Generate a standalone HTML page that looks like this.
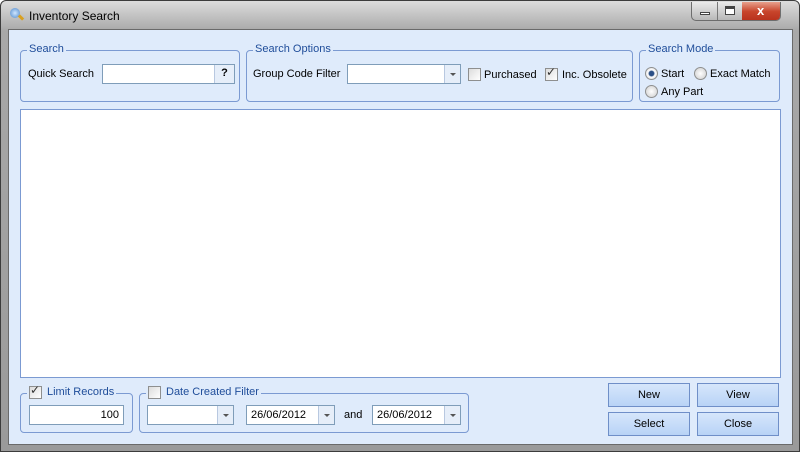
<!DOCTYPE html>
<html><head><style>
*{box-sizing:border-box;margin:0;padding:0}
body{width:800px;height:452px;overflow:hidden;font-family:"Liberation Sans",sans-serif;font-size:11px;color:#000;background:#fff}
.win{position:absolute;left:0;top:0;width:800px;height:452px;border:1px solid #3c3c3c;border-radius:6px 6px 0 0;background:linear-gradient(#dcdcdc,#a8a8a8 30px,#9a9a9a);}
.a{position:absolute}
.client{left:7px;top:28px;width:785px;height:416px;background:#dfebfb;border:1px solid #6a6a6a}
.grp{position:absolute;border:1px solid #7b9ad2;border-radius:4px}
.gt{position:absolute;top:-8px;left:6px;background:#dfebfb;padding:0 2px;color:#1f4d9a;font-size:11px}
.inp{position:absolute;background:#fff;border:1px solid #7f9db9;height:20px;font-size:11px;padding:3px 4px}
.dd{position:absolute;right:0;top:0;width:16px;height:18px;border-left:1px solid #b8c8e0;background:#e6eef9}
.dd:after{content:"";position:absolute;left:5px;top:8px;border:3px solid transparent;border-top:3px solid #555}
.cb{position:absolute;width:13px;height:13px;border:1px solid #8e8f8f;background:linear-gradient(135deg,#dcdcdc,#fff)}
.rb{position:absolute;width:13px;height:13px;border:1px solid #8e8f8f;border-radius:50%;background:radial-gradient(#fff,#ccc)}
.lbl{position:absolute;font-size:11px;white-space:nowrap}
.btn{position:absolute;width:82px;height:24px;border:1px solid #6f8fc8;background:linear-gradient(#d6e6fb,#b8d3f6);text-align:center;line-height:22px;font-size:11px}
</style></head><body>
<div class="win">
 <div class="a" style="left:9px;top:7px;width:10px;height:10px;border-radius:50%;background:radial-gradient(#cfe6ff,#4b86c9)"></div>
 <div class="a" style="left:17px;top:15px;width:6px;height:3px;background:#d9a020;transform:rotate(45deg)"></div>
 <div class="lbl" style="left:28px;top:8px;font-size:12px">Inventory Search</div>
 <div class="a" style="left:690px;top:1px;width:90px;height:19px;border:1px solid #6d6d6d;border-top:none;border-radius:0 0 5px 5px;overflow:hidden;background:linear-gradient(#eaeaea,#b8b8b8)">
  <div class="a" style="left:25px;top:0;width:1px;height:19px;background:#777"></div>
  <div class="a" style="left:50px;top:0;width:40px;height:19px;background:linear-gradient(#e8a08c,#c8452c 50%,#b7301c)"></div>
  <div class="a" style="left:8px;top:10px;width:10px;height:3px;border:1px solid #444;background:#fff"></div>
  <div class="a" style="left:33px;top:4px;width:10px;height:9px;border:1px solid #444;border-top-width:3px;background:#fff"></div>
  <div class="lbl" style="left:65px;top:1px;color:#fff;font-weight:bold;font-size:13px">x</div>
 </div>
 <div class="a client">
  <div class="grp" style="left:11px;top:20px;width:220px;height:52px"><span class="gt">Search</span>
   <div class="lbl" style="left:7px;top:17px">Quick Search</div>
   <div class="inp" style="left:81px;top:13px;width:133px"><div style="position:absolute;right:0;top:0;width:20px;height:18px;border-left:1px solid #b8c8e0;background:#e6eef9;text-align:center;font-weight:bold;line-height:17px">?</div></div>
  </div>
  <div class="grp" style="left:237px;top:20px;width:387px;height:52px"><span class="gt">Search Options</span>
   <div class="lbl" style="left:6px;top:17px">Group Code Filter</div>
   <div class="inp" style="left:100px;top:13px;width:114px"><div class="dd"></div></div>
   <div class="cb" style="left:221px;top:17px"></div><div class="lbl" style="left:237px;top:18px">Purchased</div>
   <div class="cb" style="left:298px;top:17px"></div><div class="lbl" style="left:299px;top:14px;font-size:12px;color:#333">✓</div><div class="lbl" style="left:315px;top:18px">Inc. Obsolete</div>
  </div>
  <div class="grp" style="left:630px;top:20px;width:141px;height:52px"><span class="gt">Search Mode</span>
   <div class="rb" style="left:5px;top:16px;background:radial-gradient(#2b4f86 30%,#fff 45%,#ccc)"></div><div class="lbl" style="left:21px;top:17px">Start</div>
   <div class="rb" style="left:54px;top:16px"></div><div class="lbl" style="left:70px;top:17px">Exact Match</div>
   <div class="rb" style="left:5px;top:34px"></div><div class="lbl" style="left:21px;top:35px">Any Part</div>
  </div>
  <div class="a" style="left:11px;top:79px;width:761px;height:269px;background:#fff;border:1px solid #7b9ad2"></div>
  <div class="grp" style="left:11px;top:363px;width:113px;height:40px"><span class="gt" style="padding-left:20px">Limit Records</span>
   <div class="inp" style="left:8px;top:11px;width:95px;text-align:right">100</div>
  </div>
  <div class="cb" style="left:20px;top:356px"></div><div class="lbl" style="left:21px;top:353px;color:#333;font-size:12px">✓</div>
  <div class="grp" style="left:130px;top:363px;width:330px;height:40px"><span class="gt" style="padding-left:20px">Date Created Filter</span>
   <div class="inp" style="left:7px;top:11px;width:87px"><div class="dd"></div></div>
   <div class="inp" style="left:106px;top:11px;width:89px">26/06/2012<div class="dd"></div></div>
   <div class="lbl" style="left:204px;top:15px">and</div>
   <div class="inp" style="left:232px;top:11px;width:89px">26/06/2012<div class="dd"></div></div>
  </div>
  <div class="cb" style="left:139px;top:356px"></div>
  <div class="btn" style="left:599px;top:353px">New</div>
  <div class="btn" style="left:688px;top:353px">View</div>
  <div class="btn" style="left:599px;top:382px">Select</div>
  <div class="btn" style="left:688px;top:382px">Close</div>
 </div>
</div>
</body></html>
